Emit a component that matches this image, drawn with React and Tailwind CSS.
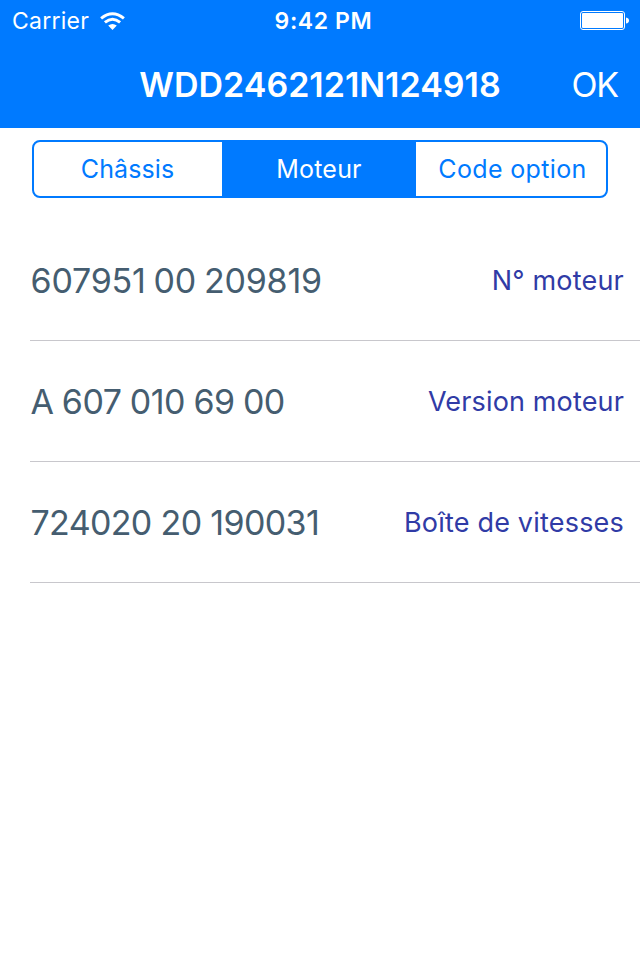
const segments = [
  { label: 'Châssis', cls: 'w-[188px] pr-px tracking-[0.1px]' },
  { label: 'Moteur', cls: 'w-[194px] bg-[#007aff] text-white tracking-[0.2px]' },
  { label: 'Code option', cls: 'flex-1 pl-[3px] tracking-[0.35px]' },
];

const rows = [
  { value: '607951 00 209819', label: 'N° moteur', valueCls: 'tracking-[-0.2px] [word-spacing:-1.5px]', labelCls: 'tracking-[0.2px]' },
  { value: 'A 607 010 69 00', label: 'Version moteur', valueCls: 'tracking-[-0.5px] [word-spacing:-0.7px]', labelCls: 'tracking-[0.15px]' },
  { value: '724020 20 190031', label: 'Boîte de vitesses', valueCls: 'tracking-[-0.65px]', labelCls: 'tracking-[0.2px]' },
];

function Wifi() {
  return (
    <svg className="ml-[11px] h-[19px] w-[25px]" viewBox="0 0 25 19" fill="none" stroke="white">
      <path d="M1.1 6.4Q12.5-3 23.9 6.4" strokeWidth="3" />
      <path d="M4.9 10.4Q12.5 4 20.1 10.4" strokeWidth="3" />
      <path d="M8.2 13.6Q12.5 10.2 16.8 13.6L12.5 18Z" fill="white" stroke="none" />
    </svg>
  );
}

export default function App() {
  return (
    <div className="h-[960px] w-[640px] overflow-hidden bg-white font-['Inter',sans-serif]">
      <header className="h-32 bg-[#007aff] text-white">
        <div className="grid h-10 grid-cols-3 items-center">
          <div className="flex items-center pl-3 pt-0.5 text-[23px]">
            <span className="tracking-[0.25px]">Carrier</span>
            <Wifi />
          </div>
          <span className="pl-[7px] pt-0.5 text-center text-[23px] font-semibold tracking-[0.6px]">9:42 PM</span>
          <svg className="mr-[11px] mt-0.5 h-5 w-[49px] justify-self-end" viewBox="0 0 49 20">
            <rect x="0.5" y="0.5" width="44" height="18" rx="2.5" fill="none" stroke="white" />
            <rect x="2" y="2" width="41" height="15" rx="1" fill="white" />
            <path d="M46 6.5Q49 7 49 9.5T46 12.5Z" fill="white" />
          </svg>
        </div>
        <div className="grid h-[88px] grid-cols-[100px_1fr_100px] items-center">
          <h1 className="col-start-2 text-center text-[34px] font-semibold">WDD2462121N124918</h1>
          <span className="pr-[22px] text-right text-[34px] tracking-[-1.2px]">OK</span>
        </div>
      </header>
      <div className="mx-8 mt-3 flex h-[58px] overflow-hidden rounded-lg border-2 border-[#007aff] text-[25px] text-[#007aff]">
        {segments.map((s) => (
          <div key={s.label} className={`flex items-center justify-center pt-0.5 ${s.cls}`}>
            {s.label}
          </div>
        ))}
      </div>
      <ul className="mt-[22px] pl-[30px]">
        {rows.map((r) => (
          <li key={r.label} className="flex h-[121px] items-center justify-between border-b border-[#c8c7cc] pr-4">
            <span className={`pl-[0.5px] text-[34px] text-[#455d70] ${r.valueCls}`}>{r.value}</span>
            <span className={`pt-[3px] text-[27px] text-[#303ba6] ${r.labelCls}`}>{r.label}</span>
          </li>
        ))}
      </ul>
    </div>
  );
}
